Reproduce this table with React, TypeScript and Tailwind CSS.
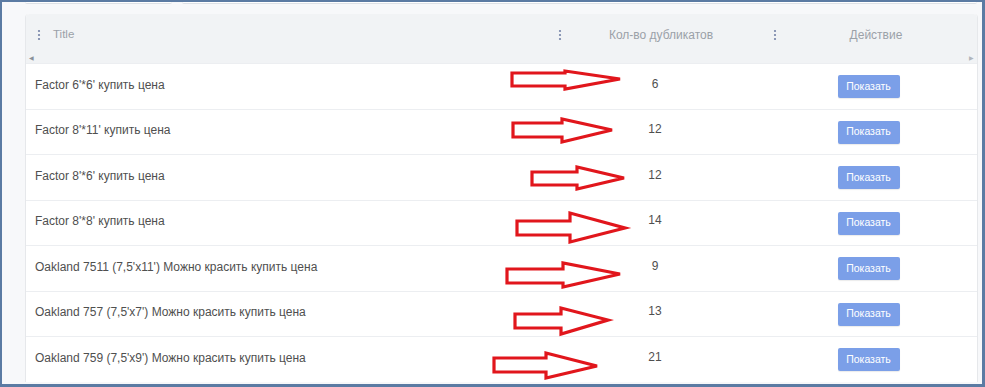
import React from 'react';

type Row = { title: string; count: number };

const rows: Row[] = [
  { title: "Factor 6'*6' купить цена", count: 6 },
  { title: "Factor 8'*11' купить цена", count: 12 },
  { title: "Factor 8'*6' купить цена", count: 12 },
  { title: "Factor 8'*8' купить цена", count: 14 },
  { title: "Oakland 7511 (7,5'x11') Можно красить купить цена", count: 9 },
  { title: "Oakland 757 (7,5'x7') Можно красить купить цена", count: 13 },
  { title: "Oakland 759 (7,5'x9') Можно красить купить цена", count: 21 },
];

// shaft left, shaft top, shaft bottom, head x, head top, head bottom, tip x, tip y
const arrows: number[][] = [
  [512, 73, 86, 565, 71, 89, 620, 79],
  [513, 123, 137, 562, 119, 142, 612, 130],
  [532, 172, 185, 577, 167, 189, 624, 178],
  [517, 221, 235, 570, 213, 242, 625, 228],
  [507, 269, 283, 563, 263, 287, 620, 274],
  [515, 314, 328, 561, 308, 334, 608, 320],
  [494, 358, 372, 546, 353, 378, 597, 366],
];

function Dots() {
  return (
    <svg width="4" height="12" viewBox="0 0 4 12" className="shrink-0">
      <circle cx="2" cy="2" r="1.1" fill="#7583a8" />
      <circle cx="2" cy="6" r="1.1" fill="#7583a8" />
      <circle cx="2" cy="10" r="1.1" fill="#7583a8" />
    </svg>
  );
}

export default function App() {
  return (
    <div className="relative w-[985px] h-[387px] overflow-hidden bg-[#f7f8fa] border-[#5b7ba3] border-l-2 border-r-[3px] border-t-2 border-b-[3px] font-['Liberation_Sans',Arial,sans-serif]">
      {/* bottom edges of the controls above the table */}
      <div className="flex h-[2px] ml-[23px] mr-[5px] gap-[10px]">
        <div className="w-[147px] bg-white border-b border-[#dde1e6] rounded-b-[3px]" />
        <div className="flex-1 bg-white border-b border-[#dde1e6] rounded-b-[3px]" />
      </div>

      <div className="ml-[23px] mt-[10px] w-[953px] rounded-t-[4px] border-l border-r border-[#e6e8eb] bg-white">
        {/* header */}
        <div className="relative grid grid-cols-[520px_218px_215px] h-[49px] bg-[#f1f3f5] rounded-t-[4px] text-[12px] text-[#9ba1a8]">
          <div className="flex items-center pl-[11px] pb-[8px]">
            <Dots />
            <span className="ml-[12px] text-[11.5px]">Title</span>
          </div>
          <div className="flex items-center pl-[12px] pb-[8px]">
            <Dots />
            <span className="flex-1 text-center pr-[4px]">Кол-во дубликатов</span>
          </div>
          <div className="flex items-center pl-[9px] pb-[8px]">
            <Dots />
            <span className="flex-1 text-center pr-[4px]">Действие</span>
          </div>
          <span className="absolute left-[3px] top-[40px] text-[6px] text-[#8a9099]">◀</span>
          <span className="absolute right-[3px] top-[40px] text-[6px] text-[#b0b5bb]">▶</span>
        </div>

        {/* body */}
        {rows.map((r, i) => (
          <div
            key={i}
            className="grid grid-cols-[520px_218px_215px] h-[45.5px] items-center border-t border-[#eceef1] text-[12px] text-[#4f4f4f]"
          >
            <div className="pl-[9px] pb-[3px]">{r.title}</div>
            <div className="text-center pb-[5px]">{r.count}</div>
            <div className="flex justify-center pr-[6px] pt-[1px]">
              <button className="w-[62px] h-[23px] rounded-[2px] bg-[#7b9fe8] text-white text-[10.5px] shadow-[0_1px_1px_rgba(0,0,0,0.08)]">
                Показать
              </button>
            </div>
          </div>
        ))}
      </div>

      {/* red annotation arrows */}
      <svg className="absolute -left-[2px] -top-[2px] pointer-events-none" width="985" height="387">
        {arrows.map((a, i) => {
          const [sl, st, sb, hx, ht, hb, tx, ty] = a;
          const pts = `${sl},${st} ${hx},${st} ${hx},${ht} ${tx},${ty} ${hx},${hb} ${hx},${sb} ${sl},${sb}`;
          return (
            <polygon
              key={i}
              points={pts}
              fill="white"
              stroke="#e1161c"
              strokeWidth="3.2"
              strokeLinejoin="miter"
            />
          );
        })}
      </svg>
    </div>
  );
}
